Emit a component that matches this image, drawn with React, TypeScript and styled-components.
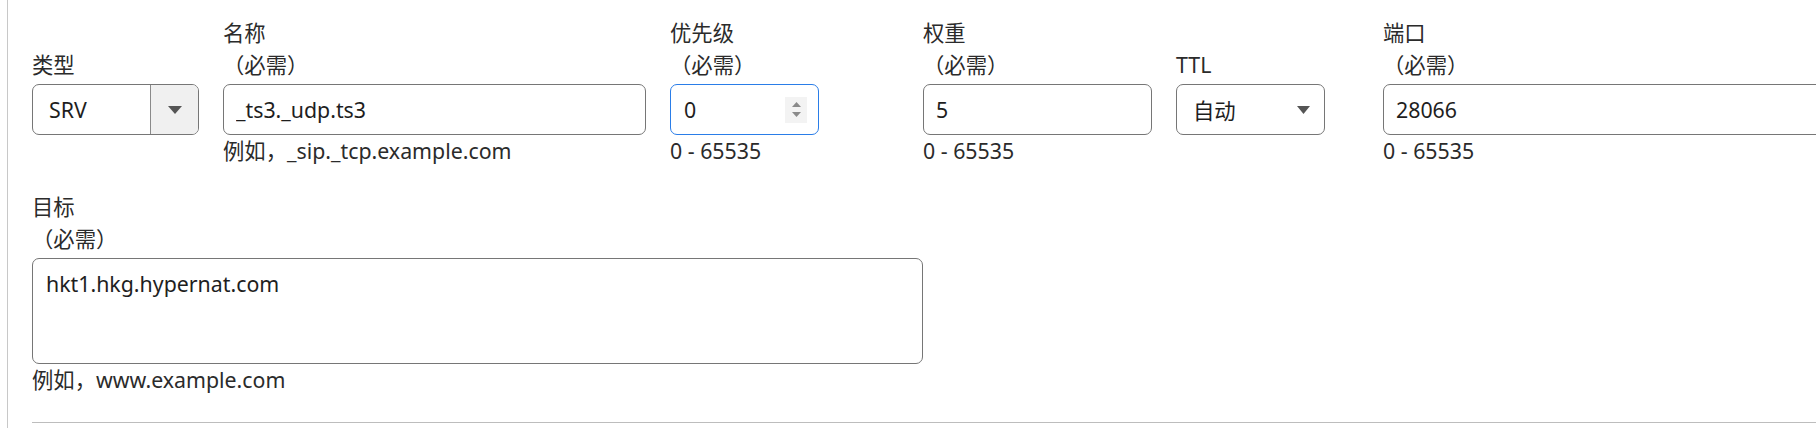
import React from 'react';
import styled, { createGlobalStyle } from 'styled-components';

const GlobalStyle = createGlobalStyle`
  html, body {
    margin: 0;
    padding: 0;
    background: #fff;
    overflow: hidden;
  }
  body {
    font-family: "Noto Sans", "Noto Sans CJK SC", sans-serif;
    font-size: 21.33px;
    color: #212529;
  }
`

const Panel = styled.div`
  margin-left: 7px;
  border-left: 1px solid #c8c8c8;
  padding: 17px 0 0 24px;
  min-height: 428px;
  box-sizing: border-box;
`

const Row = styled.div`
  display: flex;
  align-items: flex-start;
  gap: 24px;
  margin-bottom: 24px;
`

const Field = styled.div<{ $w: number }>`
  display: flex;
  flex-direction: column;
  flex: 0 0 ${p => p.$w}px;
  width: ${p => p.$w}px;
`

const Label = styled.label`
  display: flex;
  flex-direction: column;
  justify-content: flex-end;
  height: 64px;
  margin-bottom: 3px;
  line-height: 32px;
  color: #2b2b2b;
`

const Required = styled.span`
  display: block;
`

const Help = styled.div`
  line-height: 32px;
  color: #2b2b2b;
`

const TextInput = styled.input<{ $w?: number }>`
  box-sizing: border-box;
  width: ${p => (p.$w ? `${p.$w}px` : '100%')};
  height: 51px;
  border: 1px solid #767676;
  border-radius: 7px;
  padding: 0 12px;
  font: inherit;
  color: #1e1e1e;
  background: #fff;
  outline: none;
`

const NumberBox = styled.div<{ $w: number; $focused?: boolean }>`
  box-sizing: border-box;
  display: flex;
  align-items: center;
  width: ${p => p.$w}px;
  height: 51px;
  border: 1px solid ${p => (p.$focused ? '#2a7de8' : '#767676')};
  border-radius: 7px;
  padding: 0 11px 0 13px;
`

const BareInput = styled.input`
  flex: 1;
  min-width: 0;
  border: 0;
  padding: 0;
  font: inherit;
  color: #1e1e1e;
  background: transparent;
  outline: none;
`

const Spinner = styled.div`
  display: flex;
  flex-direction: column;
  align-items: center;
  justify-content: center;
  gap: 5px;
  width: 22px;
  height: 26px;
  background: #f3f3f3;
`

const SelectBox = styled.div<{ $w: number; $cell?: boolean }>`
  box-sizing: border-box;
  display: flex;
  align-items: stretch;
  width: ${p => p.$w}px;
  height: 51px;
  border: 1px solid #767676;
  border-radius: 7px;
  overflow: hidden;
  padding-right: ${p => (p.$cell ? 0 : 14)}px;
`

const SelectValue = styled.span`
  flex: 1;
  display: flex;
  align-items: center;
  padding-left: 16px;
  color: #1e1e1e;
`

const ArrowCell = styled.span<{ $cell?: boolean }>`
  display: flex;
  align-items: center;
  justify-content: center;
  width: ${p => (p.$cell ? '47px' : 'auto')};
  border-left: ${p => (p.$cell ? '1px solid #8a8a8a' : '0')};
  background: ${p => (p.$cell ? '#f0f0f0' : 'transparent')};
`

const TextArea = styled.textarea`
  box-sizing: border-box;
  width: 100%;
  height: 106px;
  border: 1px solid #767676;
  border-radius: 7px;
  padding: 9px 13px;
  font: inherit;
  line-height: 32px;
  color: #1e1e1e;
  resize: none;
  outline: none;
`

const Divider = styled.hr`
  margin: 26px 0 0 0;
  border: 0;
  border-top: 1px solid #bdbdbd;
`

const Caret = ({ w = 14 }: { w?: number }) => (
  <svg width={w} height="8" viewBox={`0 0 ${w} 8`}>
    <path d={`M0 0 H${w} L${w / 2} 8 Z`} fill="#555" />
  </svg>
)

const Select = ({ value, width, cell }: { value: string; width: number; cell?: boolean }) => (
  <SelectBox $w={width} $cell={cell}>
    <SelectValue>{value}</SelectValue>
    <ArrowCell $cell={cell}>
      <Caret w={cell ? 14 : 13} />
    </ArrowCell>
  </SelectBox>
)

const noop = () => {}

export default function App() {
  return (
    <>
      <GlobalStyle />
      <Panel>
        <Row>
          <Field $w={167}>
            <Label>类型</Label>
            <Select value="SRV" width={167} cell />
          </Field>
          <Field $w={423}>
            <Label>
              名称
              <Required>（必需）</Required>
            </Label>
            <TextInput value="_ts3._udp.ts3" onChange={noop} />
            <Help>例如，_sip._tcp.example.com</Help>
          </Field>
          <Field $w={229}>
            <Label>
              优先级
              <Required>（必需）</Required>
            </Label>
            <NumberBox $w={149} $focused>
              <BareInput value="0" onChange={noop} />
              <Spinner>
                <svg width="9" height="5" viewBox="0 0 9 5">
                  <path d="M0 5 L4.5 0 L9 5 Z" fill="#8a8a8a" />
                </svg>
                <svg width="9" height="5" viewBox="0 0 9 5">
                  <path d="M0 0 H9 L4.5 5 Z" fill="#8a8a8a" />
                </svg>
              </Spinner>
            </NumberBox>
            <Help>0 - 65535</Help>
          </Field>
          <Field $w={229}>
            <Label>
              权重
              <Required>（必需）</Required>
            </Label>
            <TextInput value="5" onChange={noop} />
            <Help>0 - 65535</Help>
          </Field>
          <Field $w={183}>
            <Label>TTL</Label>
            <Select value="自动" width={149} />
          </Field>
          <Field $w={460}>
            <Label>
              端口
              <Required>（必需）</Required>
            </Label>
            <TextInput value="28066" onChange={noop} />
            <Help>0 - 65535</Help>
          </Field>
        </Row>
        <Field $w={891}>
          <Label>
            目标
            <Required>（必需）</Required>
          </Label>
          <TextArea value="hkt1.hkg.hypernat.com" onChange={noop} />
          <Help>例如，www.example.com</Help>
        </Field>
        <Divider />
      </Panel>
    </>
  )
}
